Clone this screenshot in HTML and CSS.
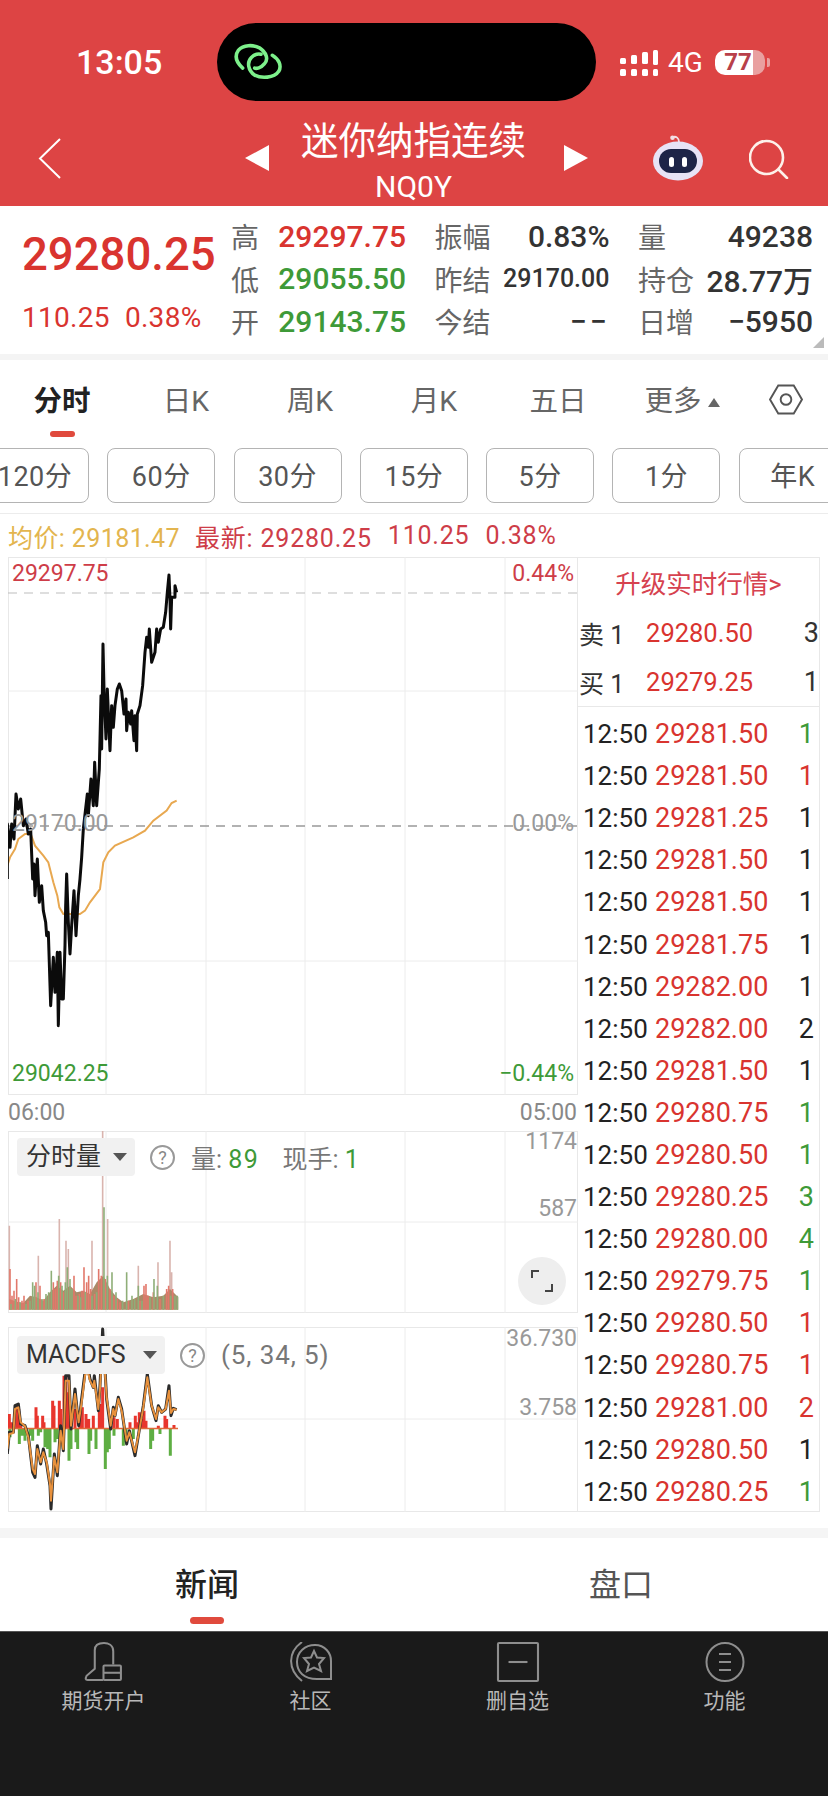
FILE: index.html
```html
<!DOCTYPE html>
<html lang="zh-CN">
<head>
<meta charset="utf-8">
<title>迷你纳指连续</title>
<link rel="stylesheet" href="styles.css">
</head>
<body>
<div class="page">
  <header class="header">
    <div class="status">
      <div class="time">13:05</div>
      <div class="island">
        <svg class="link-logo" viewBox="38 40 155 118" fill="none" stroke="#7df08b" stroke-width="11" stroke-linecap="round">
          <path d="M68 118C48 100 42 80 55 62C70 45 100 45 120 55C140 68 150 90 135 105C125 118 110 120 105 118"/>
          <path d="M160 78C180 90 190 110 180 128C165 150 125 150 105 140C85 125 80 100 95 85C105 75 115 72 125 75"/>
        </svg>
      </div>
      <div class="status-right">
        <svg class="signal" viewBox="0 0 38 27" fill="#fff">
          <rect x="0" y="9" width="6" height="6" rx="1.500"/><rect x="0" y="20" width="6" height="7" rx="1.500"/>
          <rect x="11" y="6" width="6" height="9" rx="1.500"/><rect x="11" y="20" width="6" height="7" rx="1.500"/>
          <rect x="22" y="3" width="6" height="12" rx="1.500"/><rect x="22" y="20" width="6" height="7" rx="1.500"/>
          <rect x="33" y="1" width="5" height="15" rx="1.500"/><rect x="33" y="20" width="5" height="7" rx="1.500"/>
        </svg>
        <span class="net">4G</span>
        <div class="battery"><span class="battery-level">77</span></div>
      </div>
    </div>
    <nav class="nav">
      <svg class="back" viewBox="0 0 23 41" fill="none" stroke="#fff" stroke-width="2"><path d="M22 1L2 20.5L22 40"/></svg>
      <div class="switcher">
        <span class="tri tri-left"></span>
        <div class="title-block">
          <div class="title">迷你纳指连续</div>
          <div class="code">NQ0Y</div>
        </div>
        <span class="tri tri-right"></span>
      </div>
      <svg class="robot" viewBox="0 0 50 46">
        <path d="M26 7C26 3 23 1 20 2" fill="none" stroke="#f3dfe6" stroke-width="1.800"/>
        <circle cx="19.500" cy="2.800" r="2.300" fill="#f3dfe6"/>
        <ellipse cx="25" cy="26" rx="25" ry="19.500" fill="#e7e3f6"/>
        <rect x="6" y="14" width="38" height="24" rx="12" fill="#1d2447"/>
        <rect x="16" y="22" width="5" height="10" rx="2.500" fill="#fff"/>
        <rect x="29" y="22" width="5" height="10" rx="2.500" fill="#fff"/>
      </svg>
      <svg class="search" viewBox="0 0 40 41" fill="none" stroke="#fdf1ea" stroke-width="2.600" stroke-linecap="round"><circle cx="17.500" cy="19.500" r="16.500"/><path d="M30 32L38 40"/></svg>
    </nav>
  </header>

  <section class="quote">
    <div class="quote-main">
      <div class="last red">29280.25</div>
      <div class="change red"><span>110.25</span><span>0.38%</span></div>
    </div>
    <div class="stats">
      <div class="stat"><span class="stat-label">高</span><span class="stat-value red">29297.75</span></div>
      <div class="stat"><span class="stat-label">振幅</span><span class="stat-value">0.83%</span></div>
      <div class="stat"><span class="stat-label">量</span><span class="stat-value">49238</span></div>
      <div class="stat"><span class="stat-label">低</span><span class="stat-value green">29055.50</span></div>
      <div class="stat"><span class="stat-label">昨结</span><span class="stat-value small">29170.00</span></div>
      <div class="stat"><span class="stat-label">持仓</span><span class="stat-value">28.77万</span></div>
      <div class="stat"><span class="stat-label">开</span><span class="stat-value green">29143.75</span></div>
      <div class="stat"><span class="stat-label">今结</span><span class="stat-value dashes">−−</span></div>
      <div class="stat"><span class="stat-label">日增</span><span class="stat-value">−5950</span></div>
    </div>
    <span class="corner"></span>
  </section>

  <div class="tabs">
    <div class="tab active">分时<i class="tab-bar-mark"></i></div>
    <div class="tab">日K</div>
    <div class="tab">周K</div>
    <div class="tab">月K</div>
    <div class="tab">五日</div>
    <div class="tab tab-more">更多<span class="up-tri"></span></div>
    <div class="tab-gear">
      <svg viewBox="0 0 36 32" fill="none" stroke="#555" stroke-width="2"><path d="M1.500 16L10 1.500H26L34.500 16L26 30.500H10Z"/><circle cx="18" cy="16" r="5.500"/></svg>
    </div>
  </div>

  <div class="periods">
    <div class="period">120分</div>
    <div class="period">60分</div>
    <div class="period">30分</div>
    <div class="period">15分</div>
    <div class="period">5分</div>
    <div class="period">1分</div>
    <div class="period">年K</div>
  </div>

  <div class="info">
    <span class="gold">均价: 29181.47</span>
    <span class="soft-red wide">最新: 29280.25</span>
    <span class="soft-red wide">110.25</span>
    <span class="soft-red wide">0.38%</span>
  </div>

  <section class="market">
    <div class="charts">
      <div class="chart chart-main">
        <svg viewBox="8 558 570 538">
          <g class="grid">
            <path d="M106 558V1096M206 558V1096M305 558V1096M405 558V1096M505 558V1096M8 692H578M8 962H578"/>
          </g>
          <path class="dash dash-light" d="M8 594H578"/>
          <path class="dash" d="M8 827H578"/>
          <polyline class="avg" transform="translate(0 780) scale(.3333)" points="22,260 30,235 45,210 55,180 75,165 92,165 105,200 130,230 145,250 160,310 172,350 178,385 190,405 240,405 255,395 270,370 300,330 310,250 325,220 345,200 400,175 435,155 460,125 500,95 515,72 530,65"/>
          <polyline class="price" transform="translate(0 780) scale(.3333)" points="22,300 22,135 30,205 35,135 42,180 48,45 55,90 62,60 70,140 78,120 85,165 92,150 98,300 102,255 105,350 112,240 118,370 125,320 130,395 137,430 140,470 145,460 152,680 160,535 165,640 172,520 175,740 180,520 185,660 190,660 195,500 197,380 200,285 205,430 210,525 215,440 222,335 228,470 235,350 240,300 245,235 250,150"/>
          <polyline class="price" transform="translate(0 550) scale(.3333)" points="250,840 262,735 265,800 273,690 280,770 284,640 290,770 298,660 303,440 305,600 309,285 312,420 318,570 322,420 330,605 335,470 340,535 345,470 352,420 358,405 365,425 372,495 378,450 380,545 385,490 392,525 395,485 402,575 405,500 410,605 412,495 420,470 428,410 435,310 440,265 445,295 448,240 455,340 465,310 470,240 475,280 482,240 490,235 497,190 502,130 507,78 510,150 512,240 515,145 525,145 525,110 530,130"/>
        </svg>
        <span class="axis axis-tl soft-red">29297.75</span>
        <span class="axis axis-tr soft-red">0.44%</span>
        <span class="axis axis-ml muted">29170.00</span>
        <span class="axis axis-mr muted">0.00%</span>
        <span class="axis axis-bl green">29042.25</span>
        <span class="axis axis-br green">−0.44%</span>
      </div>
      <div class="times"><span>06:00</span><span>05:00</span></div>

      <div class="chart chart-vol">
        <svg viewBox="8 1132 570 182">
          <path class="grid-line" d="M106 1132V1314M206 1132V1314M305 1132V1314M405 1132V1314M505 1132V1314M8 1223H578"/>
          <path class="vol vol-pale" transform="translate(0 1120) scale(.3333)" d="M28 572V320M115 572V410M178 572V300M198 572V365M205 572V390M276 572V365M308 572V30M323 572V300M415 572V440M474 572V430M510 572V365M515 572V460"/>
          <polygon class="vol-base" transform="translate(0 1120) scale(.3333)" points="28,572 28,540 50,548 70,552 90,530 110,535 130,545 150,520 170,500 190,515 210,500 230,520 250,515 270,525 290,490 310,470 330,510 350,535 370,550 400,540 430,525 460,535 490,530 510,510 535,535 535,572"/>
          <path class="vol vol-red" transform="translate(0 1120) scale(.3333)" d="M30 572V450M36 572V530M42 572V515M50 572V480M56 572V535M66 572V545M72 572V530M84 572V545M108 572V490M120 572V500M132 572V540M160 572V490M166 572V510M172 572V485M182 572V490M190 572V520M222 572V470M228 572V530M238 572V525M246 572V515M252 572V445M260 572V490M266 572V470M272 572V510M284 572V525M296 572V450M304 572V470M316 572V480M330 572V510M342 572V530M352 572V540M360 572V550M385 572V545M420 572V545M432 572V500M438 572V495M444 572V530M460 572V520M480 572V540M500 572V510M506 572V500M518 572V510"/>
          <path class="vol vol-green" transform="translate(0 1120) scale(.3333)" d="M33 572V555M46 572V540M60 572V550M78 572V555M90 572V545M98 572V490M104 572V500M114 572V520M126 572V540M138 572V525M146 572V520M154 572V455M176 572V470M186 572V500M196 572V490M202 572V445M210 572V480M216 572V510M234 572V530M242 572V535M256 572V520M276 572V530M290 572V520M312 572V265M322 572V470M336 572V460M348 572V520M368 572V545M380 572V460M396 572V530M404 572V540M415 572V500M426 572V545M450 572V535M462 572V480M472 572V500M490 572V530M512 572V530M525 572V530M532 572V530"/>
        </svg>
        <div class="legend">
          <div class="picker">分时量<span class="down-tri"></span></div>
          <span class="help">?</span>
          <span class="legend-text">量: <b class="green">89</b></span>
          <span class="legend-text hand">现手: <b class="green">1</b></span>
        </div>
        <span class="axis axis-v1 muted">1174</span>
        <span class="axis axis-v2 muted">587</span>
        <span class="expand">
          <svg viewBox="0 0 24 24" fill="none" stroke="#444" stroke-width="2"><path d="M2 9V2H9M22 15V22H15"/></svg>
        </span>
      </div>

      <div class="chart chart-macd">
        <svg viewBox="8 1328 570 185">
          <path class="grid-line" d="M106 1328V1513M206 1328V1513M305 1328V1513M405 1328V1513M505 1328V1513M8 1420H578"/>
          <path class="bar bar-red" transform="translate(0 1310) scale(.3333)" d="M28 358V315M34 358V340M40 358V345M50 358V285M56 358V300M62 358V350M108 358V295M112 358V320M128 358V320M132 358V340M158 358V275M162 358V290M178 358V275M182 358V300M192 358V200M198 358V200M205 358V250M212 358V330M225 358V300M240 358V320M247 358V295M258 358V315M266 358V330M280 358V320M298 358V305M304 358V285M308 358V235M332 358V350M342 358V325M352 358V330M390 358V340M406 358V320M412 358V340M418 358V310M424 358V330M432 358V305M438 358V335M475 358V350M495 358V320M500 358V330M522 358V348"/>
          <path class="bar bar-green" transform="translate(0 1310) scale(.3333)" d="M30 358V385M58 358V405M66 358V380M75 358V395M90 358V380M98 358V395M115 358V380M122 358V370M135 358V415M143 358V420M150 358V445M165 358V400M172 358V390M190 358V420M207 358V455M213 358V420M228 358V400M233 358V420M267 358V435M272 358V395M288 358V420M316 358V480M322 358V430M328 358V420M342 358V380M370 358V410M378 358V400M400 358V390M452 358V420M458 358V395M480 358V375M511 358V440"/>
          <path class="zero" d="M8 1429.500H178"/>
          <polyline class="macd-dark" transform="translate(0 1310) scale(.3333)" points="22,435 28,370 40,370 45,290 55,285 62,345 75,350 85,380 92,440 98,490 105,505 112,410 122,465 130,420 140,465 150,530 153,600 163,435 172,500 182,350 190,425 197,200 207,200 213,360 225,240 236,350 245,270 255,190 262,165 270,210 280,235 283,200 295,305 300,230 308,60 320,270 332,360 340,295 345,320 355,265 365,300 380,405 388,365 405,440 415,380 430,290 442,195 455,290 468,335 475,290 485,310 497,300 507,230 513,320 520,298 530,302"/>
          <polyline class="macd-orange" transform="translate(0 1310) scale(.3333)" points="22,420 28,375 40,372 45,300 55,295 62,340 75,352 85,385 92,435 98,480 105,495 112,420 122,460 130,430 140,460 150,525 153,575 163,445 172,490 182,365 190,420 197,215 207,215 213,350 225,255 236,340 245,280 255,200 262,180 270,215 280,235 283,215 295,300 300,240 308,90 320,265 332,350 340,300 345,320 355,270 365,305 380,395 388,370 405,430 415,380 430,295 442,205 455,290 468,330 475,295 485,310 497,300 507,245 513,312 520,300 530,302"/>
        </svg>
        <div class="legend legend-macd">
          <div class="picker picker-macd">MACDFS<span class="down-tri"></span></div>
          <span class="help">?</span>
          <span class="legend-text params">(5, 34, 5)</span>
        </div>
        <span class="axis axis-m1 muted">36.730</span>
        <span class="axis axis-m2 muted">3.758</span>
      </div>
    </div>

    <aside class="book">
      <div class="upgrade">升级实时行情&gt;</div>
      <div class="level"><span class="level-name">卖 1</span><span class="level-price red">29280.50</span><span class="level-qty">3</span></div>
      <div class="level"><span class="level-name">买 1</span><span class="level-price red">29279.25</span><span class="level-qty">1</span></div>
      <div class="trades">
        <div class="trade"><span>12:50</span><span class="red">29281.50</span><span class="green qty">1</span></div>
        <div class="trade"><span>12:50</span><span class="red">29281.50</span><span class="red qty">1</span></div>
        <div class="trade"><span>12:50</span><span class="red">29281.25</span><span class="qty">1</span></div>
        <div class="trade"><span>12:50</span><span class="red">29281.50</span><span class="qty">1</span></div>
        <div class="trade"><span>12:50</span><span class="red">29281.50</span><span class="qty">1</span></div>
        <div class="trade"><span>12:50</span><span class="red">29281.75</span><span class="qty">1</span></div>
        <div class="trade"><span>12:50</span><span class="red">29282.00</span><span class="qty">1</span></div>
        <div class="trade"><span>12:50</span><span class="red">29282.00</span><span class="qty">2</span></div>
        <div class="trade"><span>12:50</span><span class="red">29281.50</span><span class="qty">1</span></div>
        <div class="trade"><span>12:50</span><span class="red">29280.75</span><span class="green qty">1</span></div>
        <div class="trade"><span>12:50</span><span class="red">29280.50</span><span class="green qty">1</span></div>
        <div class="trade"><span>12:50</span><span class="red">29280.25</span><span class="green qty">3</span></div>
        <div class="trade"><span>12:50</span><span class="red">29280.00</span><span class="green qty">4</span></div>
        <div class="trade"><span>12:50</span><span class="red">29279.75</span><span class="green qty">1</span></div>
        <div class="trade"><span>12:50</span><span class="red">29280.50</span><span class="red qty">1</span></div>
        <div class="trade"><span>12:50</span><span class="red">29280.75</span><span class="red qty">1</span></div>
        <div class="trade"><span>12:50</span><span class="red">29281.00</span><span class="red qty">2</span></div>
        <div class="trade"><span>12:50</span><span class="red">29280.50</span><span class="qty">1</span></div>
        <div class="trade"><span>12:50</span><span class="red">29280.25</span><span class="green qty">1</span></div>
      </div>
    </aside>
  </section>

  <div class="band"></div>

  <div class="news-tabs">
    <div class="news-tab active">新闻<i class="news-mark"></i></div>
    <div class="news-tab">盘口</div>
  </div>

  <footer class="tabbar">
    <div class="tabbar-item">
      <svg viewBox="0 0 38 39" fill="none" stroke="#8e8e8e" stroke-width="2">
        <path d="M28 22V9C28 3 23 1 19 1C14 1 10 3 10 8V26L2 33Q0 37 3 37H18"/>
        <rect x="18.500" y="23" width="17" height="14" rx="1"/><path d="M18.500 30H35.500"/>
      </svg>
      <span>期货开户</span>
    </div>
    <div class="tabbar-item">
      <svg viewBox="0 0 42 40" fill="none" stroke="#8e8e8e" stroke-width="2">
        <path d="M12 39C-3 27 -2 10 12 0"/>
        <path d="M41 37H27C14 37 7 30 7 20C7 10 15 3 25 3C35 3 41 11 41 19Z"/>
        <path d="M24 9L27 15.500L34 16L29 22L31 29L24 25.500L17 29L19 22L14 16L21 15.500Z"/>
      </svg>
      <span>社区</span>
    </div>
    <div class="tabbar-item">
      <svg viewBox="0 0 40 38" fill="none" stroke="#8e8e8e" stroke-width="2"><rect x="1" y="1" width="38" height="36" rx="1"/><path d="M11 19H29"/></svg>
      <span>删自选</span>
    </div>
    <div class="tabbar-item">
      <svg viewBox="0 0 40 40" fill="none" stroke="#8e8e8e" stroke-width="2"><ellipse cx="20" cy="20" rx="18.500" ry="19"/><path d="M14 12H26M14 20H26M14 28H26"/></svg>
      <span>功能</span>
    </div>
  </footer>
</div>
</body>
</html>
```

FILE: styles.css
```css
* { box-sizing: border-box; }
html, body { margin: 0; padding: 0; background: #fff; }
body { font-family: Roboto, "Noto Sans CJK SC", sans-serif; color: #222; }
.page { width: 828px; height: 1796px; overflow: hidden; display: flex; flex-direction: column; }

/* header */
.header { background: #dd4444; height: 206px; color: #fff; flex: none; }
.status { display: flex; height: 110px; padding-top: 23px; align-items: flex-start; }
.time { width: 217px; padding-left: 76px; height: 78px; line-height: 78px; font-size: 34px; font-weight: 500; }
.island { width: 379px; height: 78px; background: #000; border-radius: 39px; padding: 20px 0 0 16px; }
.link-logo { display: block; width: 50px; height: 38px; }
.status-right { display: flex; align-items: center; height: 78px; padding-left: 24px; }
.signal { width: 38px; height: 27px; display: block; }
.net { font-size: 28px; margin-left: 10px; width: 37px; }
.battery { margin-left: 10px; width: 50px; height: 25px; border-radius: 10px; background: linear-gradient(90deg, #fff 0 76%, #e9a0a0 76%); display: flex; position: relative; }
.battery::after { content: ""; position: absolute; right: -5px; top: 8px; width: 3px; height: 9px; background: #e9a0a0; border-radius: 0 2px 2px 0; }
.battery-level { width: 46px; text-align: center; line-height: 25px; font-size: 24px; font-weight: 700; color: #b8404a; }

.nav { display: flex; align-items: center; height: 96px; padding-left: 38px; }
.back { width: 23px; height: 41px; flex: none; }
.switcher { display: flex; align-items: center; margin-left: 184px; }
.tri { width: 0; height: 0; border-top: 13px solid transparent; border-bottom: 13px solid transparent; flex: none; }
.tri-left { border-right: 24px solid #fff; }
.tri-right { border-left: 24px solid #fff; }
.title-block { width: 295px; padding-right: 6px; text-align: center; display: flex; flex-direction: column; padding-top: 6px; }
.title { font-size: 37.500px; line-height: 42px; white-space: nowrap; }
.code { font-size: 30px; line-height: 32px; margin-top: 9px; }
.robot { width: 50px; height: 46px; margin-left: 65px; flex: none; }
.search { width: 40px; height: 41px; margin-left: 46px; flex: none; }

/* quote */
.quote { height: 148px; display: flex; padding: 9px 0 0 22px; position: relative; flex: none; background: #fff; }
.quote-main { width: 209px; }
.last { font-size: 45.500px; font-weight: 500; line-height: 52px; margin-top: 14px; white-space: nowrap; }
.change { font-size: 28px; line-height: 32px; margin-top: 21px; display: flex; gap: 15px; white-space: nowrap; letter-spacing: .3px; }
.stats { width: 580px; display: grid; grid-template-columns: repeat(3, 175px); column-gap: 28.500px; grid-auto-rows: 42.500px; }
.stat { display: flex; justify-content: space-between; align-items: center; }
.stat-label { font-size: 28px; color: #666; }
.stat-value { font-size: 30px; font-weight: 500; color: #333; white-space: nowrap; }
.stat-value.small { font-size: 25px; }
.stat-value.dashes { letter-spacing: 3px; }
.corner { position: absolute; right: 4px; bottom: 6px; width: 0; height: 0; border-bottom: 11px solid #bbb; border-left: 11px solid transparent; }

/* tabs */
.tabs { flex: none; display: flex; height: 84px; border-top: 6px solid #f4f4f4; padding-top: 22px; }
.tab { width: 124px; font-size: 28.500px; line-height: 40px; color: #666; text-align: center; display: flex; flex-direction: column; align-items: center; position: relative; }
.tab.tab-more { flex-direction: row; justify-content: center; height: 40px; }
.tab.active { color: #222; font-weight: 700; }
.tab-bar-mark { width: 25px; height: 6px; background: #e04a3d; border-radius: 3px; margin-top: 9px; }
.up-tri { width: 0; height: 0; border-left: 6px solid transparent; border-right: 6px solid transparent; border-bottom: 9px solid #666; margin-left: 6px; }
.tab-gear { padding-left: 24px; }
.tab-gear svg { width: 36px; height: 31px; display: block; margin-top: 2px; }

.periods { flex: none; display: flex; gap: 18.300px; margin-left: -19px; padding: 10px 0 11px; height: 76px; border-bottom: 1px solid #ececec; width: 847px; overflow: hidden; }
.period { flex: none; width: 108px; height: 55px; border: 1px solid #b4b4b4; border-radius: 8px; font-size: 27px; line-height: 56px; text-align: center; color: #555; letter-spacing: .5px; }

.info { flex: none; height: 43px; display: flex; align-items: center; padding-left: 8px; font-size: 25px; letter-spacing: .4px; white-space: nowrap; }
.info span { margin-right: 15px; }
.info .wide { letter-spacing: .8px; margin-right: 16px; }

/* text colours */
.red, .stat-value.red { color: #d9342f; }
.green, .stat-value.green { color: #3e9a38; }
.gold { color: #e3b54f; }
.soft-red { color: #ce3d48; }
.muted { color: #999; }

/* charts */
.market { flex: none; display: flex; padding-left: 8px; height: 955px; }
.charts { width: 570px; flex: none; }
.chart { position: relative; box-shadow: inset 0 0 0 1px #e8e8e8; }
.chart svg { position: absolute; left: 0; top: 0; width: 100%; height: 100%; }
.chart-main { height: 538px; }
.chart-vol { height: 182px; }
.chart-macd { height: 185px; margin-top: 14px; }
.grid path, .grid-line { fill: none; stroke: #ececec; stroke-width: 1; }
.dash { fill: none; stroke: #999; stroke-width: 1.500; stroke-dasharray: 9 7; }
.dash-light { stroke: #bdbdbd; stroke-width: 1; }
.avg { fill: none; stroke: #e8a850; stroke-width: 2; vector-effect: non-scaling-stroke; }
.price { fill: none; stroke: #0b0b0b; stroke-width: 3; stroke-linejoin: round; vector-effect: non-scaling-stroke; }
.vol { fill: none; stroke-width: 1.600; vector-effect: non-scaling-stroke; }
.vol-pale { stroke: #d9b4ae; }
.vol-base { fill: #ab8a68; }
.vol-red { stroke: #e2786b; }
.vol-green { stroke: #8fae78; }
.bar { fill: none; stroke-width: 3; vector-effect: non-scaling-stroke; }
.bar-red { stroke: #e8352d; }
.bar-green { stroke: #5eae43; }
.zero { stroke: #e0683a; stroke-width: 1.500; fill: none; }
.macd-dark { fill: none; stroke: #2b2b2b; stroke-width: 3; stroke-linejoin: round; vector-effect: non-scaling-stroke; }
.macd-orange { fill: none; stroke: #e8913c; stroke-width: 2; stroke-linejoin: round; vector-effect: non-scaling-stroke; }

.axis { position: absolute; font-size: 23px; line-height: 28px; white-space: nowrap; }
.axis-tl { left: 4px; top: 3px; }
.axis-tr { right: 4px; top: 3px; }
.axis-ml { left: 4px; top: 253px; }
.axis-mr { right: 4px; top: 253px; }
.axis-bl { left: 4px; top: 503px; }
.axis-br { right: 4px; top: 503px; }
.axis-v1 { right: 1px; top: -3px; }
.axis-v2 { right: 1px; top: 64px; }
.axis-m1 { right: 1px; top: -2px; }
.axis-m2 { right: 1px; top: 67px; }

.times { display: flex; justify-content: space-between; height: 36px; font-size: 23px; line-height: 36px; color: #888; padding-right: 1px; }

.legend { position: absolute; left: 9px; top: 7px; display: flex; align-items: center; height: 38px; }
.legend-macd { top: 9px; }
.picker { height: 38px; width: 118px; background: #f1f1f1; border-radius: 4px; padding-left: 9px; font-size: 25px; line-height: 38px; color: #333; display: flex; align-items: center; }
.picker-macd { width: 148px; }
.down-tri { width: 0; height: 0; border-left: 7px solid transparent; border-right: 7px solid transparent; border-top: 8px solid #555; margin-left: auto; margin-right: 8px; }
.help { width: 25px; height: 25px; border: 2px solid #999; border-radius: 50%; margin-left: 15px; margin-right: 16px; font-size: 18px; line-height: 21px; text-align: center; color: #888; flex: none; }
.legend-text { font-size: 25px; color: #777; white-space: nowrap; }
.legend-text b { font-weight: 400; letter-spacing: 1.500px; }
.hand { margin-left: 23px; }
.params { font-size: 26px; letter-spacing: .9px; }
.expand { position: absolute; left: 510px; top: 126px; width: 48px; height: 48px; border-radius: 50%; background: #eeeeee; display: flex; align-items: center; justify-content: center; }
.chart .expand svg { position: static; width: 24px; height: 24px; }

/* order book */
.book { width: 242px; flex: none; height: 955px; border: 1px solid #e8e8e8; border-left: 0; }
.upgrade { height: 50px; font-size: 25.500px; line-height: 52px; color: #d6424f; text-align: center; }
.level { height: 49px; display: flex; align-items: center; font-size: 25.500px; white-space: nowrap; }
.level-name { width: 69px; font-size: 25px; color: #333; padding-left: 1px; }
.level-price { width: 160px; }
.level-qty { flex: 1; text-align: right; color: #333; font-size: 27px; }
.trades { border-top: 1px solid #e8e8e8; padding-top: 6px; }
.trade { height: 42.100px; display: flex; align-items: center; font-size: 27px; white-space: nowrap; color: #222; }
.trade span:first-child { width: 77px; padding-left: 5px; font-size: 26px; flex: none; }
.trade .qty { margin-left: auto; margin-right: 5px; }

/* lower */
.band { flex: none; height: 10px; margin-top: 16px; background: #f5f5f5; }
.news-tabs { flex: none; height: 93px; display: flex; }
.news-tab { width: 414px; font-size: 32px; line-height: 44px; padding-top: 25px; color: #555; display: flex; flex-direction: column; align-items: center; }
.news-tab.active { color: #222; font-weight: 500; }
.news-mark { width: 34px; height: 7px; border-radius: 4px; background: #e04a3d; margin-top: 10px; }
.tabbar { flex: 1; background: #1a1a1a; display: flex; border-top: 1px solid #555; }
.tabbar-item { width: 207px; display: flex; flex-direction: column; align-items: center; padding-top: 10px; }
.tabbar-item svg { height: 40px; width: 44px; display: block; }
.tabbar-item span { font-size: 21px; line-height: 28px; margin-top: 5px; color: #b8b8b8; }
```
